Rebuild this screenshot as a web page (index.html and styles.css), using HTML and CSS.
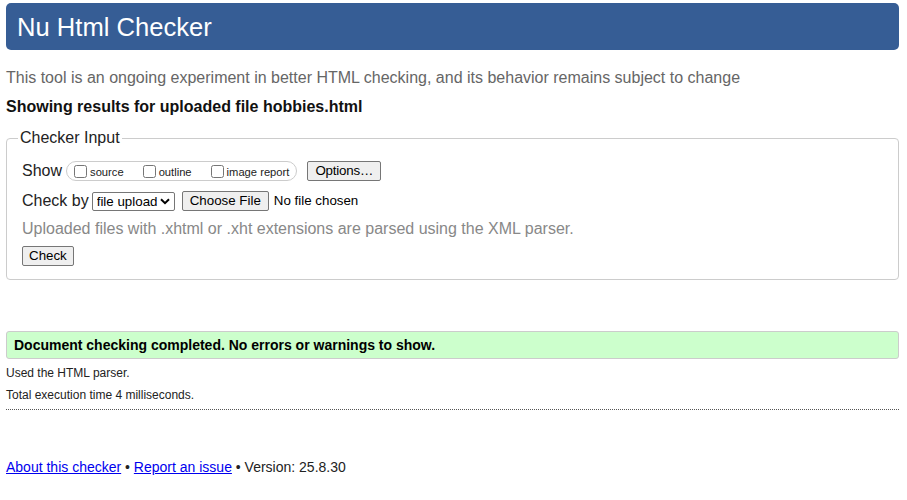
FILE: index.html
```html
<!DOCTYPE html>
<html lang="en">
<head>
<meta charset="utf-8">
<title>Nu Html Checker</title>
<link rel="stylesheet" href="styles.css">
</head>
<body>
<header class="masthead"><h1 class="title">Nu Html Checker</h1></header>
<p class="intro">This tool is an ongoing experiment in better HTML checking, and its behavior remains subject to change</p>
<p class="showing">Showing results for uploaded file hobbies.html</p>
<form class="checker">
  <fieldset class="input-set">
    <legend class="legend">Checker Input</legend>
    <div class="row">
      <span class="row-label">Show</span>
      <span class="show-group">
        <label class="opt"><input type="checkbox" class="cb"><span class="opt-text">source</span></label>
        <label class="opt"><input type="checkbox" class="cb"><span class="opt-text">outline</span></label>
        <label class="opt"><input type="checkbox" class="cb"><span class="opt-text">image report</span></label>
      </span>
      <button type="button" class="btn btn-options">Options…</button>
    </div>
    <div class="row row-check">
      <span class="row-label">Check by</span>
      <span class="sel-wrap">
        <select class="sel"><option>file upload</option></select>
        <svg class="chev" width="10" height="7" viewBox="0 0 10 7"><path d="M1 1.2 L5 5.2 L9 1.2" fill="none" stroke="#000" stroke-width="2"/></svg>
      </span>
      <input type="file" class="file">
    </div>
    <p class="hint">Uploaded files with .xhtml or .xht extensions are parsed using the XML parser.</p>
    <button type="button" class="btn btn-check">Check</button>
  </fieldset>
</form>
<p class="success">Document checking completed. No errors or warnings to show.</p>
<div class="details">
  <p class="detail">Used the HTML parser.</p>
  <p class="detail">Total execution time 4 milliseconds.</p>
</div>
<p class="footer"><a href="#" class="flink">About this checker</a> • <a href="#" class="flink">Report an issue</a> • Version: 25.8.30</p>
</body>
</html>
```
FILE: styles.css
```css
html, body {
  margin: 0;
  padding: 0;
  background: #fff;
}
body {
  padding: 3px 8px 0 6px;
  font-family: "Liberation Sans", Arial, sans-serif;
  color: #222;
  font-size: 16px;
  line-height: 18px;
}
.masthead {
  height: 47px;
  background: #365d95;
  border-radius: 5px;
  display: flex;
  align-items: center;
  padding-left: 11px;
}
.title {
  margin: 0;
  font-size: 25.6px;
  font-weight: normal;
  color: #fff;
  line-height: 30px;
  padding-top: 1px;
}
.intro {
  margin: 19px 0 0;
  color: #666;
}
.showing {
  margin: 11px 0 0;
  font-weight: bold;
  color: #111;
}
.checker {
  margin: 0;
}
.input-set {
  margin: 13px 0 0;
  border: 1px solid #ccc;
  border-radius: 4px;
  padding: 13px 15px 13px 15px;
  min-width: 0;
}
.legend {
  margin-left: -4px;
  padding: 0 2px;
  color: #222;
  line-height: 18px;
}
.row {
  display: flex;
  align-items: center;
  height: 22px;
}
.row-check {
  margin-top: 8px;
}
.row-label {
  margin-right: 4px;
}
.row-check .row-label {
  margin-right: 3px;
}
.show-group {
  display: inline-flex;
  align-items: flex-end;
  border: 1px solid #ccc;
  border-radius: 10px;
  height: 17px;
  padding: 0 7px 1px 7px;
  margin-right: 10px;
}
.opt {
  display: inline-flex;
  align-items: flex-end;
  margin-right: 19px;
}
.opt:last-child {
  margin-right: 0;
}
.cb {
  margin: 0 3px 1px 0;
  width: 13px;
  height: 13px;
}
.opt-text {
  font-size: 11.2px;
  line-height: 13px;
  color: #222;
}
.btn {
  font-family: "Liberation Sans", Arial, sans-serif;
  font-size: 13.33px;
  line-height: 16px;
  color: #000;
  background: #efefef;
  border: 1px solid #767676;
  border-radius: 2px;
  padding: 1px 6px;
  margin: 0;
}
.btn-options {
  padding: 1px 7px;
  letter-spacing: -0.2px;
}
.sel-wrap {
  position: relative;
  display: inline-block;
  width: 83px;
  height: 19px;
  margin-right: 7px;
}
.sel {
  appearance: none;
  -webkit-appearance: none;
  font-family: "Liberation Sans", Arial, sans-serif;
  font-size: 13.33px;
  line-height: 17px;
  color: #000;
  height: 19px;
  width: 83px;
  margin: 0;
  border: 1px solid #767676;
  border-radius: 2px;
  background: #fff;
  padding: 0 0 0 4px;
  box-sizing: border-box;
}
.chev {
  position: absolute;
  right: 5px;
  top: 6px;
  pointer-events: none;
}
.file {
  font-family: "Liberation Sans", Arial, sans-serif;
  font-size: 13.33px;
  color: #000;
  margin: 0;
}
.file::file-selector-button {
  font-family: "Liberation Sans", Arial, sans-serif;
  font-size: 13.33px;
  line-height: 16px;
  color: #000;
  background: #efefef;
  border: 1px solid #767676;
  border-radius: 2px;
  padding: 1px 7px;
  margin: 0 5px 0 0;
}
.hint {
  margin: 8px 0 0;
  color: #888;
}
.btn-check {
  margin-top: 8px;
  display: block;
}
.success {
  margin: 51px 0 0;
  background: #ccffcc;
  border: 1px solid #ccc;
  border-radius: 3px;
  padding: 0 7px;
  height: 26px;
  line-height: 26px;
  font-size: 14px;
  font-weight: bold;
  color: #000;
}
.details {
  margin-top: 7px;
  padding-bottom: 7px;
  border-bottom: 1px dotted #555;
}
.detail {
  margin: 0 0 8px;
  font-size: 12px;
  line-height: 14px;
  color: #222;
}
.detail:last-child {
  margin-bottom: 0;
}
.footer {
  margin: 49px 0 0;
  font-size: 14px;
  line-height: 16px;
  color: #222;
}
.flink {
  color: #0000ee;
}
```
